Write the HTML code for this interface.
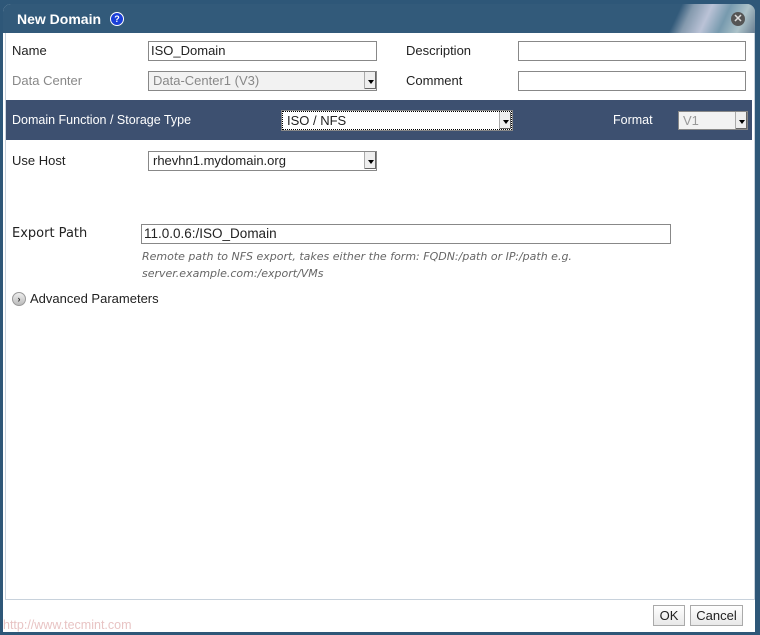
<!DOCTYPE html>
<html><head><style>
body{margin:0;width:760px;height:635px;background:#2e5778;position:relative;overflow:hidden;font-family:"Liberation Sans",sans-serif;font-size:13px;color:#222}
.win{position:absolute;left:3px;top:4px;width:752px;height:628px;background:#fff;border-radius:8px 8px 0 0;overflow:hidden}
.hdr{position:absolute;left:0;top:0;width:752px;height:29px;background:#325a7a}
.hdr .gl{position:absolute;right:0;top:0;width:110px;height:29px;background:linear-gradient(115deg,transparent 0 30%,#9ab 40%,#dde 55%,#8ab 70%,#cdd 85%,#789 100%);opacity:.8}
.title{position:absolute;left:14px;top:7px;color:#fff;font-weight:bold;font-size:14px}
.help{position:absolute;left:107px;top:8px;width:12px;height:12px;border-radius:50%;background:#1a3fd8;border:1px solid #fff;color:#fff;font-size:9px;font-weight:bold;text-align:center;line-height:12px}
.close{position:absolute;left:728px;top:8px;width:14px;height:14px;border-radius:50%;background:#555;color:#ddd;font-size:11px;text-align:center;line-height:14px;font-weight:bold}
.body{position:absolute;left:2px;top:29px;width:748px;height:566px;border:1px solid #c8d2dc;border-top:none;background:#fff}
.foot{position:absolute;left:0;top:596px;width:752px;height:32px;background:#fff}
.a{position:absolute}
.lbl{position:absolute;font-size:13px}
.in{position:absolute;border:1px solid #888;height:18px;box-sizing:border-box;background:#fff;font-size:13px;line-height:17px;padding-left:2px}
.sel{position:absolute;border:1px solid #888;height:19px;box-sizing:border-box;background:#fff;font-size:13px;line-height:17px;padding-left:4px}
.sel .ar{position:absolute;right:0;top:0;width:11px;height:17px;background:#eee;border-left:1px solid #aaa;box-shadow:inset -1px -1px 0 #666}
.sel .ar:after{content:"";position:absolute;left:3px;top:8px;border:3px solid transparent;border-top:4px solid #000}
.band{position:absolute;left:6px;top:100px;width:746px;height:40px;background:#3d5070}
.btn{position:absolute;top:605px;height:21px;border:1px solid #aaa;background:linear-gradient(#fff,#e8e8e8);font-size:13px;line-height:20px;text-align:center;box-sizing:border-box}
</style></head><body>
<div class="win">
<div class="hdr"><div class="gl"></div></div>
<div class="title">New Domain</div><div class="help">?</div>
<div class="close">✕</div>
<div class="body"></div>
<div class="foot"></div>
</div>
<div class="lbl" style="left:12px;top:43px">Name</div>
<div class="in" style="left:148px;top:41px;width:229px;height:20px">ISO_Domain</div>
<div class="lbl" style="left:406px;top:43px">Description</div>
<div class="in" style="left:518px;top:41px;width:228px;height:20px"></div>
<div class="lbl" style="left:12px;top:73px;color:#888">Data Center</div>
<div class="sel" style="left:148px;top:71px;width:229px;height:20px;background:#f2f2f2;color:#888">Data-Center1 (V3)<div class="ar"></div></div>
<div class="lbl" style="left:406px;top:73px">Comment</div>
<div class="in" style="left:518px;top:71px;width:228px;height:20px"></div>
<div class="band"></div>
<div class="lbl" style="left:12px;top:113px;color:#fff;font-size:12.5px">Domain Function / Storage Type</div>
<div class="sel" style="left:282px;top:111px;width:230px;height:19px;border:1px dotted #000;outline:1px solid #888">ISO / NFS<div class="ar"></div></div>
<div class="lbl" style="left:613px;top:113px;color:#fff;font-size:12.5px">Format</div>
<div class="sel" style="left:678px;top:111px;width:70px;height:19px;background:#f2f2f2;color:#999">V1<div class="ar"></div></div>
<div class="lbl" style="left:12px;top:153px">Use Host</div>
<div class="sel" style="left:148px;top:151px;width:229px;height:20px">rhevhn1.mydomain.org<div class="ar"></div></div>
<div class="lbl" style="left:12px;top:226px;font-family:'DejaVu Sans',sans-serif;font-size:13px">Export Path</div>
<div class="in" style="left:141px;top:224px;width:530px;height:20px;font-size:13.5px">11.0.0.6:/ISO_Domain</div>
<div class="lbl" style="left:142px;top:248px;font-family:'DejaVu Sans',sans-serif;font-style:italic;font-size:11px;color:#666;line-height:17px">Remote path to NFS export, takes either the form: FQDN:/path or IP:/path e.g.<br>server.example.com:/export/VMs</div>
<div class="a" style="left:12px;top:292px;width:12px;height:12px;border-radius:50%;background:linear-gradient(#eee,#bbb);border:1px solid #999;font-size:9px;line-height:12px;text-align:center;font-weight:bold;color:#333">›</div>
<div class="lbl" style="left:30px;top:291px">Advanced Parameters</div>
<div class="btn" style="left:653px;width:32px">OK</div>
<div class="btn" style="left:690px;width:53px">Cancel</div>
<div class="lbl" style="left:3px;top:618px;color:#e8c4c4;font-size:12.5px">http://www.tecmint.com</div>
</body></html>
